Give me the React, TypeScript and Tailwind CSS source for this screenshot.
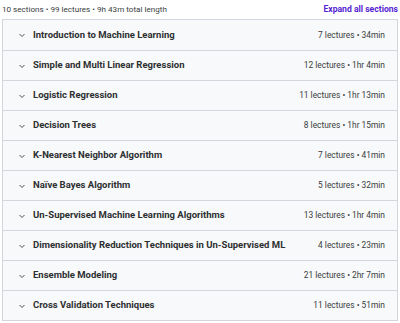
import React from "react";

const sections = [
  ["Introduction to Machine Learning", "7 lectures • 34min"],
  ["Simple and Multi Linear Regression", "12 lectures • 1hr 4min"],
  ["Logistic Regression", "11 lectures • 1hr 13min"],
  ["Decision Trees", "8 lectures • 1hr 15min"],
  ["K-Nearest Neighbor Algorithm", "7 lectures • 41min"],
  ["Naïve Bayes Algorithm", "5 lectures • 32min"],
  ["Un-Supervised Machine Learning Algorithms", "13 lectures • 1hr 4min"],
  ["Dimensionality Reduction Techniques in Un-Supervised ML", "4 lectures • 23min"],
  ["Ensemble Modeling", "21 lectures • 2hr 7min"],
  ["Cross Validation Techniques", "11 lectures • 51min"],
];

export default function App() {
  return (
    <div className="w-[400px] h-[323px] bg-white" style={{ fontFamily: "Roboto, 'Noto Sans', sans-serif" }}>
      <div className="flex items-center justify-between h-[19px] pl-[2px] pr-[2px]">
        <span className="text-[8.1px] text-[#3a3d40] whitespace-nowrap">10 sections • 99 lectures • 9h 43m total length</span>
        <span className="text-[8.6px] font-bold text-[#5624d0] whitespace-nowrap">Expand all sections</span>
      </div>
      <div className="mx-[2px] border border-[#d1d7dc]">
        {sections.map(([t, m], i) => (
          <div
            key={i}
            className={`flex items-center h-[30px] bg-[#f7f9fa] pl-[15px] pr-[12px] ${i > 0 ? "border-t border-[#d1d7dc]" : ""}`}
          >
            <svg width="8" height="8" viewBox="0 0 8 8" className="mr-[7px] shrink-0">
              <path d="M1.5 3 L4 5.5 L6.5 3" fill="none" stroke="#3a3d40" strokeWidth="0.9" />
            </svg>
            <span className="text-[9.5px] font-bold text-[#2d2f31] flex-1 whitespace-nowrap">{t}</span>
            <span className="text-[8.4px] text-[#3a3d40] whitespace-nowrap">{m}</span>
          </div>
        ))}
      </div>
    </div>
  );
}
